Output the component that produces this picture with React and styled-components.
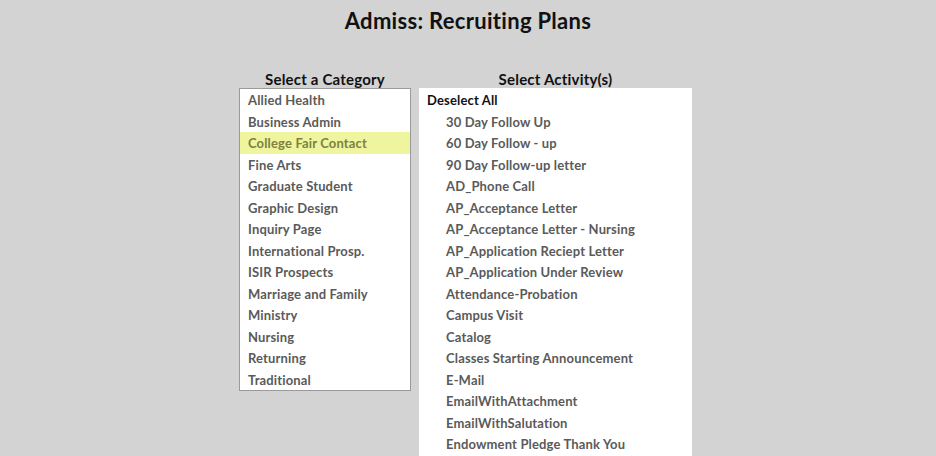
import React, { useState } from "react";
import styled, { createGlobalStyle } from "styled-components";

const categories = [
    "Allied Health",
    "Business Admin",
    "College Fair Contact",
    "Fine Arts",
    "Graduate Student",
    "Graphic Design",
    "Inquiry Page",
    "International Prosp.",
    "ISIR Prospects",
    "Marriage and Family",
    "Ministry",
    "Nursing",
    "Returning",
    "Traditional",
];

const activities = [
    "30 Day Follow Up",
    "60 Day Follow - up",
    "90 Day Follow-up letter",
    "AD_Phone Call",
    "AP_Acceptance Letter",
    "AP_Acceptance Letter - Nursing",
    "AP_Application Reciept Letter",
    "AP_Application Under Review",
    "Attendance-Probation",
    "Campus Visit",
    "Catalog",
    "Classes Starting Announcement",
    "E-Mail",
    "EmailWithAttachment",
    "EmailWithSalutation",
    "Endowment Pledge Thank You",
];

export default function App() {
    const [category, setCategory] = useState("College Fair Contact");

    return (
        <>
            <GlobalStyle />
            <Page>
                <Title>Admiss: Recruiting Plans</Title>
                <Columns>
                    <Column width={172}>
                        <Heading>Select a Category</Heading>
                        <CategoryList>
                            {categories.map((c) => (
                                <Item
                                    key={c}
                                    selected={c === category}
                                    onClick={() => setCategory(c)}
                                >
                                    {c}
                                </Item>
                            ))}
                        </CategoryList>
                    </Column>
                    <Column width={273}>
                        <Heading>Select Activity(s)</Heading>
                        <ActivityList>
                            <DeselectAll>Deselect All</DeselectAll>
                            {activities.map((a) => (
                                <Item key={a} indent>
                                    {a}
                                </Item>
                            ))}
                        </ActivityList>
                    </Column>
                </Columns>
            </Page>
        </>
    );
}

const GlobalStyle = createGlobalStyle`
    html, body {
        margin: 0;
        padding: 0;
        overflow: hidden;
        background: #d3d3d3;
    }
`;

const Page = styled.main`
    font-family: Lato, "Open Sans", sans-serif;
    height: 100vh;
    display: flex;
    flex-direction: column;
    align-items: center;
`;

const Title = styled.h1`
    margin: 7px 0 0;
    font-size: 22px;
    font-weight: 700;
    letter-spacing: 0.3px;
    line-height: 28px;
    color: #111;
`;

const Columns = styled.div`
    flex: 1;
    display: flex;
    gap: 8px;
    margin-top: 33px;
    padding-right: 5px;
`;

const Column = styled.section`
    width: ${(p) => p.width}px;
    display: flex;
    flex-direction: column;
`;

const Heading = styled.h2`
    margin: 0;
    padding-top: 2px;
    font-size: 15px;
    font-weight: 700;
    letter-spacing: 0.2px;
    line-height: 18px;
    text-align: center;
    color: #111;
`;

const CategoryList = styled.ul`
    margin: 0;
    padding: 0;
    list-style: none;
    background: #fff;
    border: 1px solid #9a9a9a;
`;

const ActivityList = styled.ul`
    flex: 1;
    margin: 0;
    padding: 1px 0 0;
    list-style: none;
    background: #fff;
    overflow: hidden;
`;

const Item = styled.li`
    box-sizing: border-box;
    height: 21.5px;
    padding: 1px 0 0 ${(p) => (p.indent ? 27 : 8)}px;
    line-height: 20.5px;
    font-size: 13px;
    font-weight: 700;
    letter-spacing: 0.15px;
    white-space: nowrap;
    color: ${(p) => (p.selected ? "#80803c" : "#5a5a5a")};
    background: ${(p) => (p.selected ? "#eef59e" : "transparent")};
    cursor: pointer;
`;

const DeselectAll = styled(Item)`
    color: #111;
`;
